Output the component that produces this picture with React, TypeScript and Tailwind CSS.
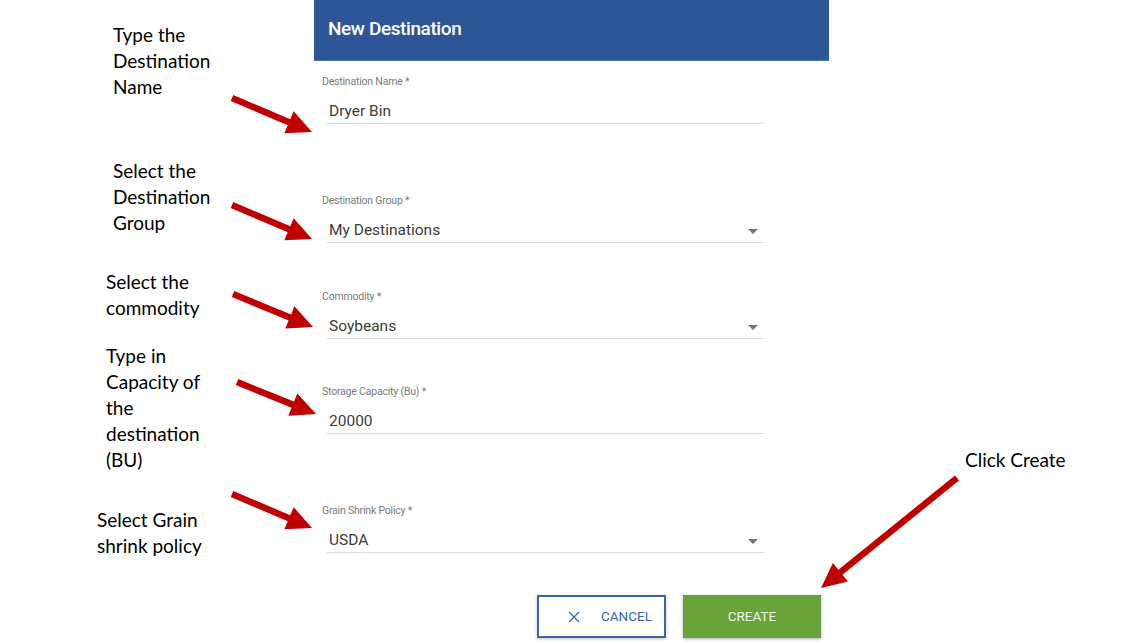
import React from "react";

interface Field {
  label: string;
  value: string;
  select?: boolean;
  mt: string;
}

const FIELDS: Field[] = [
  { label: "Destination Name *", value: "Dryer Bin", mt: "mt-[14px]" },
  { label: "Destination Group *", value: "My Destinations", select: true, mt: "mt-[70px]" },
  { label: "Commodity *", value: "Soybeans", select: true, mt: "mt-[47px]" },
  { label: "Storage Capacity (Bu) *", value: "20000", mt: "mt-[46px]" },
  { label: "Grain Shrink Policy *", value: "USDA", select: true, mt: "mt-[70px]" },
];

const NOTES: { lines: string[]; cls: string }[] = [
  { lines: ["Type the", "Destination", "Name"], cls: "mt-[22px] pl-[113px]" },
  { lines: ["Select the", "Destination", "Group"], cls: "mt-[58px] pl-[113px]" },
  { lines: ["Select the", "commodity"], cls: "mt-[33px] pl-[106px]" },
  { lines: ["Type in", "Capacity of", "the", "destination", "(BU)"], cls: "mt-[22px] pl-[106px]" },
  { lines: ["Select Grain", "shrink policy"], cls: "mt-[34px] pl-[97px]" },
];

// tail -> tip
const ARROWS: [number, number, number, number][] = [
  [232, 98, 312, 132],
  [232, 205, 312, 239],
  [233, 294, 313, 327],
  [237, 382, 316, 414],
  [232, 494, 312, 528],
  [957, 478, 821, 588],
];

function Arrow({ a }: { a: [number, number, number, number] }) {
  const [x1, y1, x2, y2] = a;
  const dx = x2 - x1;
  const dy = y2 - y1;
  const len = Math.sqrt(dx * dx + dy * dy);
  const ux = dx / len;
  const uy = dy / len;
  const headLen = 25;
  const half = 12;
  const bx = x2 - ux * headLen;
  const by = y2 - uy * headLen;
  const pts = `${x2},${y2} ${bx - uy * half},${by + ux * half} ${bx + uy * half},${by - ux * half}`;
  return (
    <g>
      <line x1={x1} y1={y1} x2={bx + ux * 2} y2={by + uy * 2} stroke="#c00000" strokeWidth={6.5} />
      <polygon points={pts} fill="#c00000" />
    </g>
  );
}

function Caret() {
  return (
    <svg width="10" height="5" viewBox="0 0 10 5" className="mr-[6px]">
      <path d="M0 0 L10 0 L5 5 Z" fill="#757575" />
    </svg>
  );
}

export default function App() {
  return (
    <div className="relative w-[1144px] h-[643px] bg-white overflow-hidden flex">
      {/* annotations */}
      <div className="w-[314px] flex flex-col font-['Lato',sans-serif] text-[19px] leading-[26px] text-black">
        {NOTES.map((n, i) => (
          <div key={i} className={n.cls}>
            {n.lines.map((l) => (
              <div key={l}>{l}</div>
            ))}
          </div>
        ))}
      </div>

      {/* dialog */}
      <div className="w-[515px] flex flex-col font-['Roboto',sans-serif]">
        <div className="h-[61px] bg-[#2d5697] flex items-center px-[14px] border-b border-[#4a6fa8]">
          <span className="text-white text-[19px] font-medium tracking-[-0.4px] mt-[-1px]">New Destination</span>
        </div>
        {FIELDS.map((f) => (
          <div key={f.label} className={`${f.mt} flex flex-col`}>
            <div className="pl-[8px] text-[10.5px] leading-[14px] text-[#7a7a7a] tracking-[-0.2px]">{f.label}</div>
            <div className="mt-[12px] ml-[13px] w-[437px] h-[23px] border-b border-[#dcdcdc] flex items-center justify-between">
              <span className="pl-[2px] text-[15.5px] leading-[20px] text-[#3c3c3c] mt-[-2px]">{f.value}</span>
              {f.select && <Caret />}
            </div>
          </div>
        ))}
        <div className="mt-[42px] flex justify-end gap-[17px] pr-[8px]">
          <button className="w-[129px] h-[43px] border-2 border-[#3a64a4] bg-white flex items-center pl-[29px] gap-[21px] text-[#3a64a4] text-[13.5px] shadow-[0_1px_3px_rgba(0,0,0,0.25)]">
            <svg width="12" height="12" viewBox="0 0 12 12">
              <path d="M1 1 L11 11 M11 1 L1 11" stroke="#3a64a4" strokeWidth="1.3" />
            </svg>
            <span>CANCEL</span>
          </button>
          <button className="w-[138px] h-[43px] bg-[#6aa33a] text-[#eef6e6] text-[13.5px] flex items-center justify-center shadow-[0_1px_3px_rgba(0,0,0,0.3)]">
            CREATE
          </button>
        </div>
      </div>

      {/* right side */}
      <div className="flex-1 flex flex-col">
        <div className="mt-[447px] pl-[136px] font-['Lato',sans-serif] text-[19px] leading-[26px] text-black">Click Create</div>
      </div>

      <svg className="absolute inset-0 pointer-events-none" width="1144" height="643">
        {ARROWS.map((a, i) => (
          <Arrow key={i} a={a} />
        ))}
      </svg>
    </div>
  );
}
